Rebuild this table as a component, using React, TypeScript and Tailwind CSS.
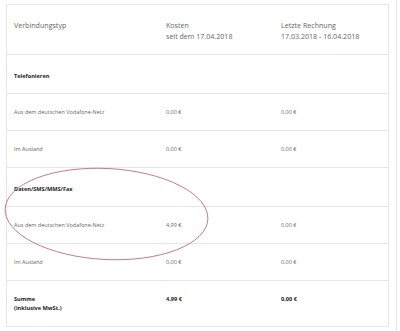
import React from "react";

const rows: { kind: "head" | "item"; label: string; a?: string; b?: string; h: string }[] = [
  { kind: "head", label: "Telefonieren", h: "h-[39px]" },
  { kind: "item", label: "Aus dem deutschen Vodafone-Netz", a: "0,00 €", b: "0,00 €", h: "h-[37px]" },
  { kind: "item", label: "Im Ausland", a: "0,00 €", b: "0,00 €", h: "h-[37px]" },
  { kind: "head", label: "Daten/SMS/MMS/Fax", h: "h-[39px]" },
  { kind: "item", label: "Aus dem deutschen Vodafone-Netz", a: "4,99 €", b: "0,00 €", h: "h-[37px]" },
  { kind: "item", label: "Im Ausland", a: "0,00 €", b: "0,00 €", h: "h-[37px]" },
];

export default function App() {
  return (
    <div
      className="relative flex h-[331px] w-[400px] overflow-hidden bg-white"
      style={{ fontFamily: '"Open Sans", "Liberation Sans", sans-serif' }}
    >
      <div className="pl-[6px] pt-[4px]">
        <div className="w-[383px] border border-[#e6e6e6]">
          {/* header */}
          <div className="flex h-[50px] border-b border-[#e6e6e6] pl-[7px] pt-[15px] text-[7.1px] leading-[11px] text-[#666]">
            <div className="w-[152px]">Verbindungstyp</div>
            <div className="w-[115px]">
              <div>Kosten</div>
              <div>seit dem 17.04.2018</div>
            </div>
            <div className="flex-1">
              <div>Letzte Rechnung</div>
              <div>17.03.2018 - 16.04.2018</div>
            </div>
          </div>
          {rows.map((r, i) => (
            <div
              key={i}
              className={`flex items-center border-b border-[#e6e6e6] pl-[7px] ${r.h}`}
            >
              {r.kind === "head" ? (
                <div className="pt-[4px] text-[5.6px] font-bold leading-[9px] text-[#222]">{r.label}</div>
              ) : (
                <div className="flex w-full text-[5.5px] leading-[9px] text-[#666]">
                  <div className="w-[152px]">{r.label}</div>
                  <div className="w-[115px]">{r.a}</div>
                  <div className="flex-1">{r.b}</div>
                </div>
              )}
            </div>
          ))}
          <div className="flex h-[45px] pl-[7px] pt-[14px] text-[5.6px] font-bold leading-[9px] text-[#222]">
            <div className="w-[152px]">
              <div>Summe</div>
              <div>(inklusive MwSt.)</div>
            </div>
            <div className="w-[115px]">4,99 €</div>
            <div className="flex-1">0,00 €</div>
          </div>
        </div>
      </div>
      <div className="ml-[7px] h-full w-px bg-[#e6e6e6]" />
      <svg
        className="pointer-events-none absolute left-0 top-0"
        width="400"
        height="331"
        viewBox="0 0 400 331"
      >
        <ellipse
          cx="106.5"
          cy="214"
          rx="101.5"
          ry="45.5"
          transform="rotate(3 106.5 214)"
          fill="none"
          stroke="#b06070"
          strokeWidth="0.8"
        />
      </svg>
    </div>
  );
}
